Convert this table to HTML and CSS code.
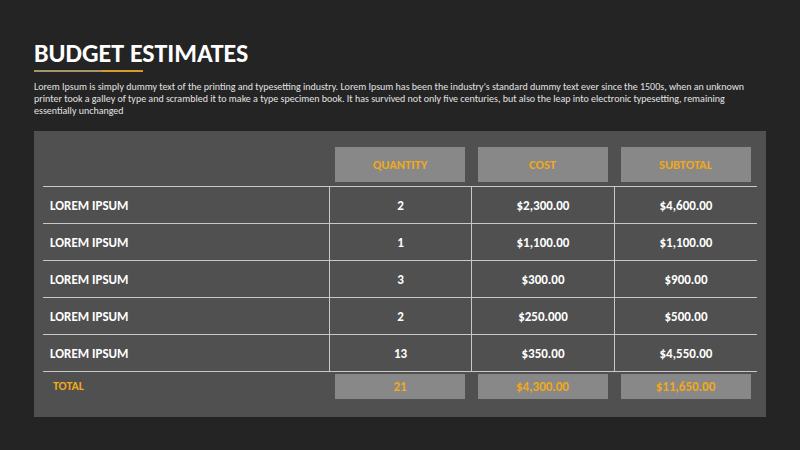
FILE: index.html
```html
<!DOCTYPE html>
<html>
<head>
<meta charset="utf-8">
<link rel="stylesheet" href="styles.css">
</head>
<body>
<div class="slide">
  <h1 class="title">BUDGET ESTIMATES</h1>
  <div class="rule"><span class="rule-a"></span><span class="rule-b"></span></div>
  <p class="intro">Lorem Ipsum is simply dummy text of the printing and typesetting industry. Lorem Ipsum has been the industry's standard dummy text ever since the 1500s, when an unknown printer took a galley of type and scrambled it to make a type specimen book. It has survived not only five centuries, but also the leap into electronic typesetting, remaining essentially unchanged</p>
  <div class="panel">
    <div class="grid">
      <div class="hcell"></div>
      <div class="hcell"><div class="hbox">QUANTITY</div></div>
      <div class="hcell"><div class="hbox">COST</div></div>
      <div class="hcell"><div class="hbox">SUBTOTAL</div></div>

      <div class="cell name">LOREM IPSUM</div>
      <div class="cell num">2</div>
      <div class="cell num">$2,300.00</div>
      <div class="cell num">$4,600.00</div>

      <div class="cell name">LOREM IPSUM</div>
      <div class="cell num">1</div>
      <div class="cell num">$1,100.00</div>
      <div class="cell num">$1,100.00</div>

      <div class="cell name">LOREM IPSUM</div>
      <div class="cell num">3</div>
      <div class="cell num">$300.00</div>
      <div class="cell num">$900.00</div>

      <div class="cell name">LOREM IPSUM</div>
      <div class="cell num">2</div>
      <div class="cell num">$250.000</div>
      <div class="cell num">$500.00</div>

      <div class="cell name">LOREM IPSUM</div>
      <div class="cell num">13</div>
      <div class="cell num">$350.00</div>
      <div class="cell num">$4,550.00</div>

      <div class="tcell tname">TOTAL</div>
      <div class="tcell"><div class="tbox">21</div></div>
      <div class="tcell"><div class="tbox">$4,300.00</div></div>
      <div class="tcell"><div class="tbox">$11,650.00</div></div>
    </div>
  </div>
</div>
</body>
</html>
```
FILE: styles.css
```css
html, body {
  margin: 0;
  padding: 0;
  background: #242424;
}
.slide {
  width: 800px;
  height: 450px;
  background: #242424;
  font-family: Carlito, Lato, "Open Sans", sans-serif;
  color: #fff;
  padding-left: 34px;
  box-sizing: border-box;
  overflow: hidden;
}
.title {
  margin: 0;
  padding-top: 38px;
  font-size: 26px;
  line-height: 30px;
  font-weight: 700;
  color: #fff;
}
.rule {
  display: flex;
  margin-top: 2px;
  height: 2px;
}
.rule-a {
  width: 68px;
  background: #a8946a;
}
.rule-b {
  width: 41px;
  background: #d89a28;
}
.intro {
  margin: 9px 0 0 0;
  width: 720px;
  font-size: 10px;
  line-height: 12px;
  color: #e2e2e2;
}
.panel {
  margin-top: 14px;
  width: 732px;
  height: 286px;
  background: #505050;
  box-sizing: border-box;
  padding: 16px 9px 0 9px;
}
.grid {
  display: grid;
  grid-template-columns: 286px 142px 143px 143px;
  grid-template-rows: 39px repeat(5, 37px) 37px;
}
.hcell {
  display: flex;
  justify-content: center;
  align-items: flex-start;
}
.hbox {
  width: 130px;
  height: 35px;
  background: #888888;
  color: #f0a81c;
  font-size: 12.5px;
  font-weight: 700;
  display: flex;
  align-items: center;
  justify-content: center;
}
.cell {
  border-top: 1px solid #c8c8c8;
  display: flex;
  align-items: center;
  font-size: 13px;
  font-weight: 700;
  color: #fff;
}
.cell.name {
  padding-left: 7px;
}
.cell.num {
  justify-content: center;
  border-left: 1px solid #c8c8c8;
}
.tcell {
  border-top: 1px solid #c8c8c8;
  display: flex;
  justify-content: center;
  align-items: flex-start;
  padding-top: 2px;
}
.tname {
  justify-content: flex-start;
  align-items: center;
  padding: 0 0 8px 10px;
  color: #f0a81c;
  font-size: 12px;
  font-weight: 700;
}
.tbox {
  width: 130px;
  height: 25px;
  background: #888888;
  color: #f0a81c;
  font-size: 13px;
  font-weight: 700;
  display: flex;
  align-items: center;
  justify-content: center;
}
```
